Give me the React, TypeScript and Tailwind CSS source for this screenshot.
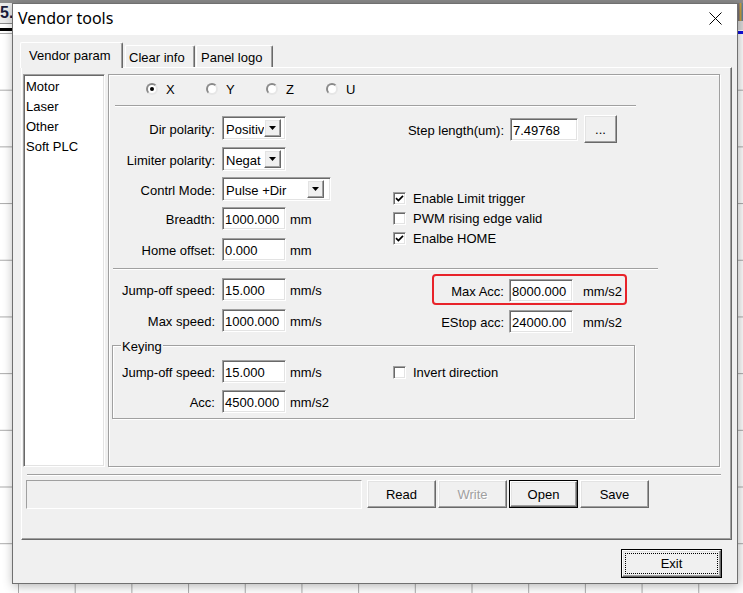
import React from 'react'

// classic win32 bevels
const sunken =
  'bg-white border border-t-[#a0a0a0] border-l-[#a0a0a0] border-r-white border-b-white shadow-[inset_1px_1px_0_#696969,inset_-1px_-1px_0_#e3e3e3]'
const raised =
  'bg-[#f0f0f0] border border-t-white border-l-white border-r-[#696969] border-b-[#696969] shadow-[inset_-1px_-1px_0_#a0a0a0,inset_1px_1px_0_#e3e3e3]'
const etched = 'border border-[#a0a0a0] shadow-[inset_1px_1px_0_#fff,1px_1px_0_#fff]'

function Field({ value, w = 'w-[64px]' }: { value: string; w?: string }) {
  return (
    <div className={`${sunken} ${w} h-[23px] shrink-0 flex items-center pl-[2px] pt-[3px] overflow-hidden whitespace-nowrap`}>
      {value}
    </div>
  )
}

function DropArrow() {
  return (
    <svg width="7" height="4" viewBox="0 0 7 4">
      <path d="M0 0H7L3.5 4Z" fill="#000" />
    </svg>
  )
}

function Combo({ value, w, gap }: { value: string; w: string; gap: string }) {
  return (
    <div className={`${sunken} ${w} h-[24px] shrink-0 flex items-center`}>
      <span className="flex-1 pl-[3px] pt-[3px] overflow-hidden whitespace-nowrap">{value}</span>
      <div className={`${raised} ${gap} w-[17px] h-[18px] shrink-0 flex items-center justify-center`}>
        <DropArrow />
      </div>
    </div>
  )
}

function Radio({ label, checked }: { label: string; checked?: boolean }) {
  return (
    <div className="w-[60px] flex items-center gap-[8px] h-[12px]">
      <div className="w-[12px] h-[12px] rounded-full bg-white border-2 border-t-[#8a8a8a] border-l-[#8a8a8a] border-r-[#e6e6e6] border-b-[#e6e6e6] flex items-center justify-center">
        {checked && <div className="w-[4px] h-[4px] rounded-full bg-black" />}
      </div>
      <span className="leading-[14px] pt-[2px]">{label}</span>
    </div>
  )
}

function Check({ label, checked }: { label: string; checked?: boolean }) {
  return (
    <div className="flex items-center gap-[7px] h-[20px]">
      <div className={`${sunken} w-[13px] h-[13px] shrink-0 flex items-center justify-center`}>
        {checked && (
          <svg width="9" height="9" viewBox="0 0 9 9" fill="none">
            <path d="M1 4.2L3.4 6.6L8 1.8" stroke="#000" strokeWidth="1.7" />
          </svg>
        )}
      </div>
      <span className="pt-[1px]">{label}</span>
    </div>
  )
}

function Row({ label, lw = 'w-[103px]', mt, children }: { label: string; lw?: string; mt: string; children: React.ReactNode }) {
  return (
    <div className={`flex items-center h-[24px] ${mt}`}>
      <span className={`${lw} text-right shrink-0 whitespace-nowrap pt-[3px]`}>{label}</span>
      <div className="ml-[7px] flex items-center">{children}</div>
    </div>
  )
}

function Unit({ children, ml = 'ml-[4px]' }: { children: React.ReactNode; ml?: string }) {
  return <span className={`${ml} whitespace-nowrap pt-[3px]`}>{children}</span>
}

function Btn({ children, def, disabled, w = 'w-[69px]', h = 'h-[28px]' }: { children: React.ReactNode; def?: boolean; disabled?: boolean; w?: string; h?: string }) {
  const face = (
    <div
      className={`${raised} h-full w-full flex items-center justify-center pt-[1px] ${
        disabled ? 'text-[#a0a0a0] [text-shadow:1px_1px_0_#fff]' : ''
      }`}
    >
      {children}
    </div>
  )
  return def ? (
    <div className={`${w} ${h} shrink-0 border border-black`}>{face}</div>
  ) : (
    <div className={`${w} ${h} shrink-0`}>{face}</div>
  )
}

export default function App() {
  return (
    <div className="relative w-[743px] h-[593px] overflow-hidden bg-white bg-[linear-gradient(to_right,#ababab_1px,transparent_1px),linear-gradient(to_bottom,#ababab_1px,transparent_1px)] bg-[size:56.7px_56.7px] bg-[position:18px_33px] font-['Liberation_Sans',Arial,sans-serif] text-[13px] text-black">
      {/* desktop behind the dialog */}
      <div className="absolute left-0 top-0 w-[743px] h-[3px] bg-[#8c8c8c]" />
      <div className="absolute left-0 top-[3px] w-[12px] h-[21px] bg-[#ececec] border-b border-[#8c8c8c] font-bold text-[16px] leading-[20px] text-[#1a1a3a] overflow-hidden">
        5.
      </div>
      <div className="absolute left-0 top-[28px] w-[12px] h-[3px] bg-black" />
      <div className="absolute left-[738px] top-[3px] w-[5px] h-[18px] bg-[linear-gradient(to_right,#6a6a8a,#c8a040,#4a7ab0)]" />
      <div className="absolute left-[738px] top-[21px] w-[5px] h-[9px] bg-[#dcdcdc]" />
      <div className="absolute left-[738px] top-[31px] w-[5px] h-[3px] bg-[#1010e0]" />

      {/* dialog window */}
      <div className="absolute left-[12px] top-[3px] w-[726px] h-[581px] border border-[#707070] bg-[#f0f0f0] shadow-[1px_2px_10px_rgba(0,0,0,0.3)] flex flex-col">
        {/* title bar */}
        <div className="h-[31px] shrink-0 bg-white flex items-center justify-between pl-[5px] pr-[15px]">
          <span className="font-['Noto_Sans',sans-serif] text-[16px] leading-[20px] pb-[3px]">Vendor tools</span>
          <svg width="13" height="13" viewBox="0 0 13 13" className="mb-[2px]">
            <path d="M0.5 0.5L12.5 12.5M12.5 0.5L0.5 12.5" stroke="#000" strokeWidth="1" />
          </svg>
        </div>

        <div className="flex-1 flex flex-col pt-[7px]">
          {/* tabs */}
          <div className="flex items-end h-[25px] pl-[7px]">
            <div className="relative z-10 -mb-px h-[26px] w-[103px] pl-[8px] pt-[1px] flex items-center bg-[#f0f0f0] border-t border-l border-white border-r border-r-[#696969] shadow-[inset_-1px_0_0_#a0a0a0] rounded-t-[2px]">
              Vendor param
            </div>
            <div className="ml-[2px] h-[22px] w-[70px] pl-[3px] pt-[2px] flex items-center border-t border-l border-white border-r border-r-[#696969] shadow-[inset_-1px_0_0_#a0a0a0] rounded-t-[2px]">
              Clear info
            </div>
            <div className="ml-[1px] h-[22px] w-[77px] pl-[4px] pt-[2px] flex items-center border-t border-l border-white border-r border-r-[#696969] shadow-[inset_-1px_0_0_#a0a0a0] rounded-t-[2px]">
              Panel logo
            </div>
          </div>

          {/* tab page */}
          <div className="ml-[8px] w-[711px] h-[473px] border border-t-white border-l-white border-r-[#696969] border-b-[#696969] shadow-[inset_-1px_-1px_0_#a0a0a0] flex flex-col pt-[6px] pl-[1px]">
            <div className="flex h-[393px] gap-[3px]">
              {/* category list */}
              <div className={`${sunken} w-[82px] h-full pl-[2px] pt-[2px] flex flex-col`}>
                <span className="leading-[20px]">Motor</span>
                <span className="leading-[20px]">Laser</span>
                <span className="leading-[20px]">Other</span>
                <span className="leading-[20px]">Soft PLC</span>
              </div>

              {/* parameter panel */}
              <div className={`${etched} w-[612px] h-full flex flex-col`}>
                <div className="flex pl-[37px] pt-[8px]">
                  <Radio label="X" checked />
                  <Radio label="Y" />
                  <Radio label="Z" />
                  <Radio label="U" />
                </div>
                <div className="ml-[6px] mt-[10px] w-[521px] h-[2px] border-t border-t-[#a0a0a0] border-b border-b-white" />

                {/* axis settings */}
                <div className="flex h-[161px] ml-[3px]">
                  <div className="w-[281px] shrink-0 flex flex-col">
                    <Row label="Dir polarity:" mt="mt-[9px]">
                      <Combo value="Positiv" w="w-[64px]" gap="mr-[4px]" />
                    </Row>
                    <Row label="Limiter polarity:" mt="mt-[7px]">
                      <Combo value="Negat" w="w-[64px]" gap="mr-[4px]" />
                    </Row>
                    <Row label="Contrl Mode:" mt="mt-[6px]">
                      <Combo value="Pulse +Dir" w="w-[109px]" gap="mr-[6px]" />
                    </Row>
                    <Row label="Breadth:" mt="mt-[5px]">
                      <Field value="1000.000" />
                      <Unit>mm</Unit>
                    </Row>
                    <Row label="Home offset:" mt="mt-[7px]">
                      <Field value="0.000" />
                      <Unit>mm</Unit>
                    </Row>
                  </div>
                  <div className="flex flex-col">
                    <div className="flex items-center h-[28px] mt-[8px]">
                      <span className="w-[111px] text-right whitespace-nowrap pt-[3px]">Step length(um):</span>
                      <div className="ml-[6px]">
                        <Field value="7.49768" w="w-[68px]" />
                      </div>
                      <div className="ml-[6px]">
                        <Btn w="w-[33px]">...</Btn>
                      </div>
                    </div>
                    <div className="mt-[45px] flex flex-col">
                      <Check label="Enable Limit trigger" checked />
                      <Check label="PWM rising edge valid" />
                      <Check label="Enalbe HOME" checked />
                    </div>
                  </div>
                </div>

                <div className="ml-[4px] w-[545px] h-[2px] border-t border-t-[#a0a0a0] border-b border-b-white" />

                {/* speeds */}
                <div className="flex h-[75px] ml-[3px]">
                  <div className="w-[281px] shrink-0 flex flex-col">
                    <Row label="Jump-off speed:" mt="mt-[7px]">
                      <Field value="15.000" />
                      <Unit>mm/s</Unit>
                    </Row>
                    <Row label="Max speed:" mt="mt-[7px]">
                      <Field value="1000.000" />
                      <Unit>mm/s</Unit>
                    </Row>
                  </div>
                  <div className="flex flex-col">
                    <div className="relative flex items-center h-[24px] mt-[8px]">
                      <span className="w-[111px] text-right pt-[3px]">Max Acc:</span>
                      <div className="ml-[5px]">
                        <Field value="8000.000" />
                      </div>
                      <Unit ml="ml-[10px]">mm/s2</Unit>
                      <div className="absolute left-[39px] top-[-4px] w-[195px] h-[31px] border-2 border-[#e8232a] rounded-[4px]" />
                    </div>
                    <div className="flex items-center h-[24px] mt-[7px]">
                      <span className="w-[111px] text-right pt-[3px]">EStop acc:</span>
                      <div className="ml-[5px]">
                        <Field value="24000.00" />
                      </div>
                      <Unit ml="ml-[10px]">mm/s2</Unit>
                    </div>
                  </div>
                </div>

                {/* keying group */}
                <div className={`${etched} ml-[3px] w-[523px] h-[74px] flex flex-col`}>
                  <span className="-mt-[7px] ml-[8px] px-[1px] self-start bg-[#f0f0f0] leading-[15px]">Keying</span>
                  <div className="flex">
                    <div className="w-[280px] shrink-0 flex flex-col">
                      <Row label="Jump-off speed:" lw="w-[102px]" mt="mt-[5px]">
                        <Field value="15.000" />
                        <Unit>mm/s</Unit>
                      </Row>
                      <Row label="Acc:" lw="w-[102px]" mt="mt-[6px]">
                        <Field value="4500.000" />
                        <Unit>mm/s2</Unit>
                      </Row>
                    </div>
                    <div className="mt-[8px]">
                      <Check label="Invert direction" />
                    </div>
                  </div>
                </div>
              </div>
            </div>

            <div className="ml-[4px] mt-[7px] w-[694px] h-[2px] border-t border-t-[#a0a0a0] border-b border-b-white" />

            {/* status + actions */}
            <div className="flex items-start mt-[4px] ml-[3px]">
              <div className="w-[336px] h-[29px] border border-t-[#a0a0a0] border-l-[#a0a0a0] border-r-white border-b-white" />
              <div className="ml-[5px] flex gap-[2px]">
                <Btn>Read</Btn>
                <Btn disabled>Write</Btn>
                <Btn def>Open</Btn>
                <Btn>Save</Btn>
              </div>
            </div>
          </div>

          {/* exit */}
          <div className="flex justify-end mt-[9px] pr-[15px]">
            <div className="w-[101px] h-[29px] border border-black">
              <div className={`${raised} h-full w-full flex items-center justify-center pt-[1px] outline-1 outline-dotted outline-black -outline-offset-4`}>
                Exit
              </div>
            </div>
          </div>
        </div>
      </div>
    </div>
  )
}
